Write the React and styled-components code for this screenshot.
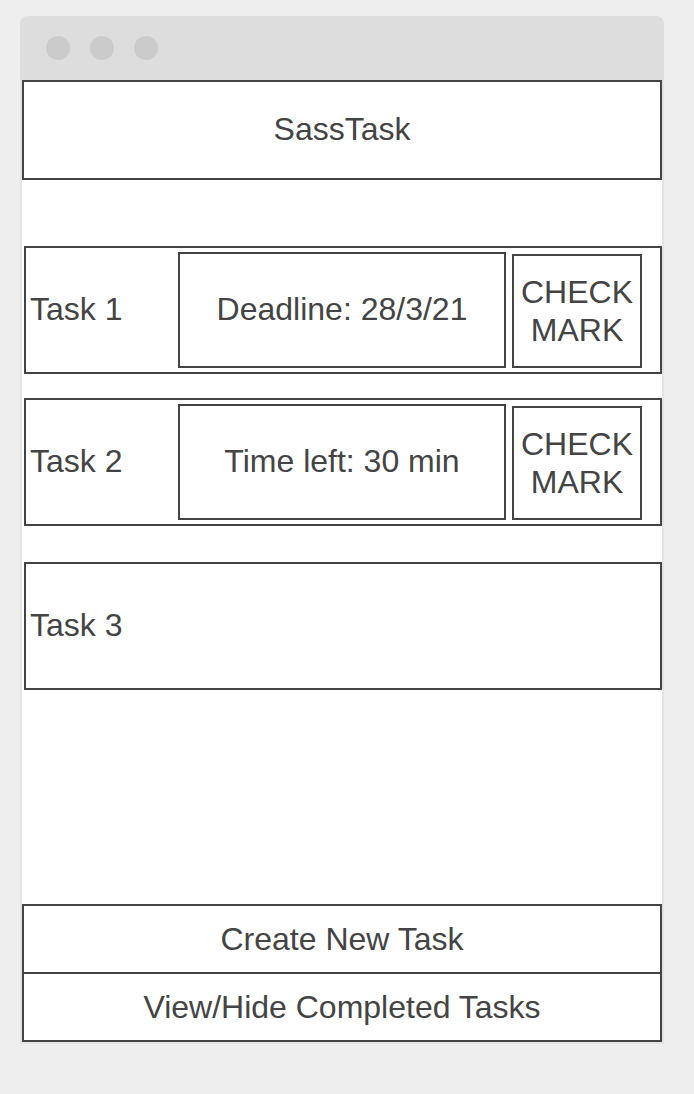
import styled, { createGlobalStyle } from "styled-components";

const GlobalStyle = createGlobalStyle`
  html, body {
    margin: 0;
    padding: 0;
    background-color: #eeeeee;
  }
  body {
    font-family: "Liberation Sans", Arial, sans-serif;
    color: #444444;
  }
`;

const tasks = [
  { name: "Task 1", info: "Deadline: 28/3/21", check: true },
  { name: "Task 2", info: "Time left: 30 min", check: true },
  { name: "Task 3" },
];

const App = () => {
  return (
    <>
      <GlobalStyle />
      <Page>
        <Window>
          <TitleBar>
            <Dot />
            <Dot />
            <Dot />
          </TitleBar>
          <Body>
            <Header>SassTask</Header>
            <TaskList>
              {tasks.map((task, i) => (
                <TaskRow key={task.name} $gap={i === 0 ? 66 : i === 1 ? 24 : 36}>
                  <TaskName>{task.name}</TaskName>
                  {task.info && <InfoBox>{task.info}</InfoBox>}
                  {task.check && <CheckBox>CHECK MARK</CheckBox>}
                </TaskRow>
              ))}
            </TaskList>
            <Footer>
              <FooterButton>Create New Task</FooterButton>
              <FooterButton $joined>View/Hide Completed Tasks</FooterButton>
            </Footer>
          </Body>
        </Window>
      </Page>
    </>
  );
};

const Page = styled.div`
  padding: 16px 30px 50px 20px;
  min-height: 100vh;
  box-sizing: border-box;
`;

const Window = styled.div`
  width: 644px;
  display: flex;
  flex-direction: column;
`;

const TitleBar = styled.div`
  height: 64px;
  background-color: #dddddd;
  border-radius: 8px 8px 0 0;
  display: flex;
  align-items: center;
  gap: 20px;
  padding-left: 26px;
  box-sizing: border-box;
`;

const Dot = styled.div`
  width: 24px;
  height: 24px;
  border-radius: 50%;
  background-color: #cbcbcb;
`;

const Body = styled.div`
  height: 964px;
  background-color: #ffffff;
  border: 2px solid #e3e3e3;
  border-top: none;
  display: flex;
  flex-direction: column;
  box-sizing: border-box;
`;

const Header = styled.div`
  height: 100px;
  border: 2px solid #444444;
  box-sizing: border-box;
  padding-bottom: 2px;
  display: flex;
  justify-content: center;
  align-items: center;
  font-size: 32px;
`;

const TaskList = styled.div`
  display: flex;
  flex-direction: column;
  flex: 1;
`;

const TaskRow = styled.div`
  margin-top: ${(p) => p.$gap}px;
  margin-left: 2px;
  height: 128px;
  border: 2px solid #444444;
  box-sizing: border-box;
  display: flex;
  align-items: flex-start;
`;

const TaskName = styled.div`
  width: 152px;
  padding: 0 0 2px 4px;
  box-sizing: border-box;
  align-self: center;
  font-size: 32px;
`;

const InfoBox = styled.div`
  width: 328px;
  height: 116px;
  margin-top: 4px;
  padding-bottom: 2px;
  border: 2px solid #444444;
  box-sizing: border-box;
  display: flex;
  justify-content: center;
  align-items: center;
  font-size: 32px;
`;

const CheckBox = styled.div`
  width: 130px;
  height: 114px;
  margin-top: 6px;
  margin-left: 6px;
  border: 2px solid #444444;
  box-sizing: border-box;
  display: flex;
  justify-content: center;
  align-items: center;
  text-align: center;
  font-size: 32px;
  line-height: 38px;
`;

const Footer = styled.div`
  display: flex;
  flex-direction: column;
`;

const FooterButton = styled.div`
  height: ${(p) => (p.$joined ? 68 : 70)}px;
  border: 2px solid #444444;
  border-top: ${(p) => (p.$joined ? "none" : "2px solid #444444")};
  box-sizing: border-box;
  display: flex;
  justify-content: center;
  align-items: center;
  font-size: 32px;
`;

export default App;
